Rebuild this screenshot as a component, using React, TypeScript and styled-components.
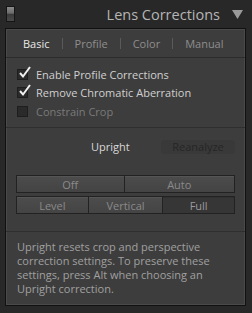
import React from "react";
import styled, { createGlobalStyle } from "styled-components";

const Global = createGlobalStyle`
  html, body { margin: 0; padding: 0; background: #282828; }
  body { font-family: "Open Sans", "DejaVu Sans", sans-serif; }
`;

const Frame = styled.div`
  width: 252px;
  height: 313px;
  background: #282828;
  display: flex;
  flex-direction: column;
  box-sizing: border-box;
  padding: 0 6px 7px 5px;
`;

const Header = styled.div`
  height: 28px;
  display: flex;
  align-items: center;
`;

const Switch = styled.div`
  width: 7px;
  height: 14px;
  margin-left: 1px;
  border: 1px solid #151515;
  background: linear-gradient(#8a8a8a 0%, #6a6a6a 45%, #3a3a3a 50%, #4a4a4a 100%);
`;

const Title = styled.div`
  margin-left: auto;
  color: #b5b5b5;
  font-size: 14.5px;
  margin-right: 12px;
`;

const Tri = styled.svg`
  width: 11px;
  height: 9px;
  margin-right: 3px;
`;

const Panel = styled.div`
  flex: 1;
  border: 1px solid #111;
  box-shadow: inset 0 0 0 1px #4a4a4a;
  background: #3d3d3d;
  display: flex;
  flex-direction: column;
`;

const Tabs = styled.div`
  height: 28px;
  display: flex;
  align-items: center;
  padding-left: 17px;
  border-bottom: 1px solid #2c2c2c;
  font-size: 11px;
`;

const Tab = styled.span<{ $active?: boolean }>`
  color: ${(p) => (p.$active ? "#e8e8e8" : "#8e8e8e")};
`;

const Sep = styled.span`
  width: 1px;
  height: 11px;
  background: #5a5a5a;
  margin: 0 12px;
`;

const Checks = styled.div`
  display: flex;
  flex-direction: column;
  padding: 7px 0 6.5px 11px;
  border-bottom: 1px solid #2f2f2f;
`;

const CheckRow = styled.div<{ $dim?: boolean }>`
  height: 18.5px;
  display: flex;
  align-items: center;
  font-size: 11px;
  color: ${(p) => (p.$dim ? "#7a7a7a" : "#d0d0d0")};
`;

const Box = styled.span`
  position: relative;
  width: 9px;
  height: 9px;
  border: 1px solid #1e1e1e;
  background: #2a2a2a;
  margin-right: 8px;
  flex: none;
`;

const Tick = styled.svg`
  position: absolute;
  left: 0px;
  top: -4px;
  width: 14px;
  height: 13px;
`;

const Upright = styled.div`
  display: flex;
  flex-direction: column;
  padding: 0 10px;
  border-bottom: 1px solid #2f2f2f;
`;

const UprightHead = styled.div`
  height: 37px;
  margin-bottom: 10px;
  display: flex;
  align-items: center;
`;

const UprightLabel = styled.span`
  margin-left: 75px;
  color: #d8d8d8;
  font-size: 11px;
`;

const Reanalyze = styled.span`
  margin-left: auto;
  width: 74px;
  height: 14px;
  border-radius: 4px;
  background: #393939;
  color: #262626;
  font-size: 11px;
  display: flex;
  align-items: center;
  justify-content: center;
`;

const BtnRow = styled.div`
  display: flex;
  margin-bottom: 3px;
  &:last-child { margin-bottom: 17px; }
`;

const Btn = styled.div<{ $w: number; $sel?: boolean }>`
  width: ${(p) => p.$w}px;
  height: 16px;
  box-sizing: content-box;
  border: 1px solid #222;
  margin-left: -1px;
  &:first-child { margin-left: 0; }
  background: ${(p) =>
    p.$sel ? "#363636" : "linear-gradient(#4c4c4c, #444)"};
  box-shadow: inset 0 1px 0 ${(p) => (p.$sel ? "#303030" : "#555")};
  color: ${(p) => (p.$sel ? "#9a9a9a" : "#8a8a8a")};
  font-size: 11px;
  display: flex;
  align-items: center;
  justify-content: center;
`;

const Note = styled.div`
  padding: 8px 11px 0 11px;
  color: #a0a0a0;
  font-size: 11px;
  line-height: 14px;
`;

export default function App() {
  return (
    <>
      <Global />
      <Frame>
        <Header>
          <Switch />
          <Title>Lens Corrections</Title>
          <Tri viewBox="0 0 11 9">
            <polygon points="0,0 11,0 5.5,9" fill="#9a9a9a" />
          </Tri>
        </Header>
        <Panel>
          <Tabs>
            <Tab $active>Basic</Tab>
            <Sep />
            <Tab>Profile</Tab>
            <Sep />
            <Tab>Color</Tab>
            <Sep />
            <Tab>Manual</Tab>
          </Tabs>
          <Checks>
            <CheckRow>
              <Box>
                <Tick viewBox="0 0 14 13">
                  <path d="M2 7 L5 10.5 L12 1" stroke="#f0f0f0" strokeWidth="2" fill="none" />
                </Tick>
              </Box>
              Enable Profile Corrections
            </CheckRow>
            <CheckRow>
              <Box>
                <Tick viewBox="0 0 14 13">
                  <path d="M2 7 L5 10.5 L12 1" stroke="#f0f0f0" strokeWidth="2" fill="none" />
                </Tick>
              </Box>
              Remove Chromatic Aberration
            </CheckRow>
            <CheckRow $dim>
              <Box />
              Constrain Crop
            </CheckRow>
          </Checks>
          <Upright>
            <UprightHead>
              <UprightLabel>Upright</UprightLabel>
              <Reanalyze>Reanalyze</Reanalyze>
            </UprightHead>
            <BtnRow>
              <Btn $w={107}>Off</Btn>
              <Btn $w={110}>Auto</Btn>
            </BtnRow>
            <BtnRow>
              <Btn $w={71}>Level</Btn>
              <Btn $w={74}>Vertical</Btn>
              <Btn $w={71} $sel>Full</Btn>
            </BtnRow>
          </Upright>
          <Note>
            Upright resets crop and perspective correction settings. To preserve these settings, press Alt when choosing an Upright correction.
          </Note>
        </Panel>
      </Frame>
    </>
  );
}
